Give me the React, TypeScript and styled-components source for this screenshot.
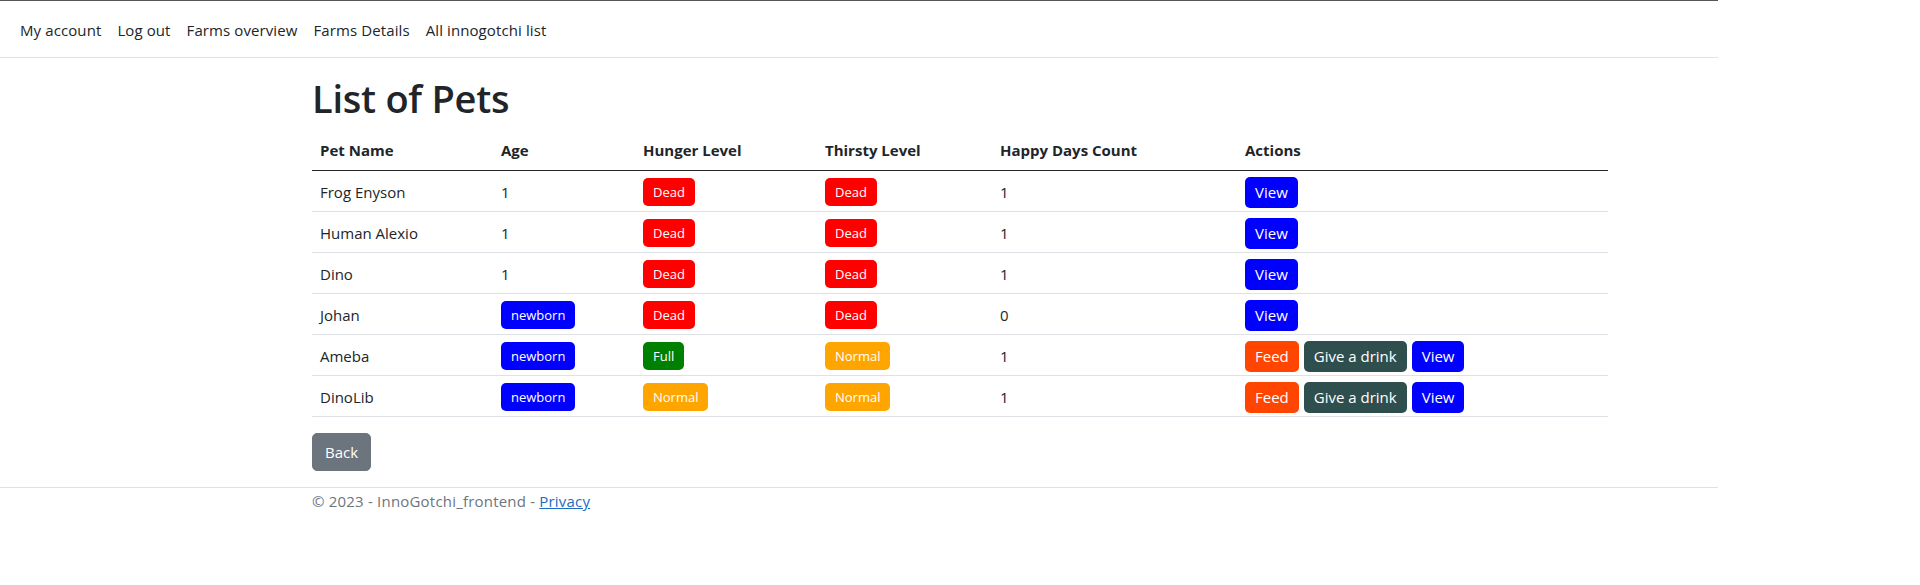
import React from 'react';
import styled, { createGlobalStyle } from 'styled-components';

const GlobalStyle = createGlobalStyle`
  html, body {
    margin: 0;
    padding: 0;
    background: #fff;
  }
  body {
    font-family: 'Open Sans', 'Noto Sans', sans-serif;
    font-size: 15px;
    line-height: 24px;
    color: #212529;
  }
`;

type Tone = 'dead' | 'newborn' | 'full' | 'normal';
type Action = 'feed' | 'drink' | 'view';

const toneColors: Record<Tone, string> = {
  dead: '#ff0000',
  newborn: '#0000ff',
  full: '#008000',
  normal: '#ffa500',
};

const actionColors: Record<Action, string> = {
  feed: '#ff4500',
  drink: '#2f4f4f',
  view: '#0000ff',
};

const actionLabels: Record<Action, string> = {
  feed: 'Feed',
  drink: 'Give a drink',
  view: 'View',
};

const Page = styled.div`
  width: 1920px;
  min-height: 585px;
`;

const NavBar = styled.nav`
  width: 1718px;
  box-sizing: border-box;
  border-top: 1px solid #555;
  border-bottom: 1px solid #dee2e6;
  padding: 8px 12px 7px;
  margin-bottom: 16px;
`;

const NavList = styled.ul`
  display: flex;
  list-style: none;
  margin: 0;
  padding: 0;
`;

const NavLink = styled.a`
  display: block;
  padding: 9px 8px 8px;
  color: #212529;
  letter-spacing: 0.1px;
  text-decoration: none;
  cursor: pointer;
`;

const Container = styled.main`
  width: 1296px;
  margin: 0 auto;
  padding-bottom: 16px;
`;

const Title = styled.h1`
  margin: 0 0 8px;
  font-size: 38px;
  line-height: 48px;
  font-weight: 600;
  letter-spacing: -0.25px;
`;

const Table = styled.table`
  width: 100%;
  table-layout: fixed;
  border-collapse: collapse;
  margin-bottom: 16px;
`;

const HeadCell = styled.th`
  text-align: left;
  font-weight: 700;
  padding: 8px;
  border-bottom: 1px solid #212529;
`;

const Row = styled.tr`
  height: 41px;
  border-bottom: 1px solid #dee2e6;
`;

const Cell = styled.td`
  padding: 5px 8px 3px;
  vertical-align: middle;
`;

const Badge = styled.span<{ $tone: Tone }>`
  display: inline-block;
  vertical-align: middle;
  padding: 4px 10px;
  font-size: 13px;
  line-height: 20px;
  border-radius: 5px;
  color: #fff;
  background: ${p => toneColors[p.$tone]};
`;

const Actions = styled.div`
  display: flex;
  gap: 5px;
`;

const ActionButton = styled.button<{ $kind: Action }>`
  font: inherit;
  font-size: 15px;
  line-height: 23px;
  padding: 4px 10px;
  border: 0;
  border-radius: 5px;
  color: #fff;
  background: ${p => actionColors[p.$kind]};
  cursor: pointer;
`;

const BackButton = styled.button`
  font: inherit;
  line-height: 24px;
  padding: 6px 12px;
  border: 1px solid #6c757d;
  border-radius: 5px;
  color: #fff;
  background: #6c757d;
  cursor: pointer;
`;

const FooterRule = styled.div`
  width: 1718px;
  border-top: 1px solid #dee2e6;
`;

const FooterText = styled.footer`
  width: 1296px;
  margin: 0 auto;
  padding-top: 1px;
  color: #6c757d;
  letter-spacing: 0.2px;
  a {
    color: #1b6ec2;
  }
`;

interface Pet {
  name: string;
  age: number | 'newborn';
  hunger: Tone;
  thirst: Tone;
  happyDays: number;
  actions: Action[];
}

const toneLabel = (t: Tone) =>
  t === 'dead' ? 'Dead' : t === 'full' ? 'Full' : t === 'normal' ? 'Normal' : 'newborn';

const pets: Pet[] = [
  { name: 'Frog Enyson', age: 1, hunger: 'dead', thirst: 'dead', happyDays: 1, actions: ['view'] },
  { name: 'Human Alexio', age: 1, hunger: 'dead', thirst: 'dead', happyDays: 1, actions: ['view'] },
  { name: 'Dino', age: 1, hunger: 'dead', thirst: 'dead', happyDays: 1, actions: ['view'] },
  { name: 'Johan', age: 'newborn', hunger: 'dead', thirst: 'dead', happyDays: 0, actions: ['view'] },
  { name: 'Ameba', age: 'newborn', hunger: 'full', thirst: 'normal', happyDays: 1, actions: ['feed', 'drink', 'view'] },
  { name: 'DinoLib', age: 'newborn', hunger: 'normal', thirst: 'normal', happyDays: 1, actions: ['feed', 'drink', 'view'] },
];

const columns = [
  { title: 'Pet Name', width: 181 },
  { title: 'Age', width: 142 },
  { title: 'Hunger Level', width: 182 },
  { title: 'Thirsty Level', width: 175 },
  { title: 'Happy Days Count', width: 245 },
  { title: 'Actions', width: 371 },
];

const App = () => (
  <Page>
    <GlobalStyle />
    <NavBar>
      <NavList>
        {['My account', 'Log out', 'Farms overview', 'Farms Details', 'All innogotchi list'].map(item => (
          <li key={item}>
            <NavLink>{item}</NavLink>
          </li>
        ))}
      </NavList>
    </NavBar>
    <Container>
      <Title>List of Pets</Title>
      <Table>
        <colgroup>
          {columns.map(c => (
            <col key={c.title} style={{ width: c.width }} />
          ))}
        </colgroup>
        <thead>
          <tr>
            {columns.map(c => (
              <HeadCell key={c.title}>{c.title}</HeadCell>
            ))}
          </tr>
        </thead>
        <tbody>
          {pets.map(pet => (
            <Row key={pet.name}>
              <Cell>{pet.name}</Cell>
              <Cell>
                {pet.age === 'newborn' ? <Badge $tone="newborn">newborn</Badge> : pet.age}
              </Cell>
              <Cell>
                <Badge $tone={pet.hunger}>{toneLabel(pet.hunger)}</Badge>
              </Cell>
              <Cell>
                <Badge $tone={pet.thirst}>{toneLabel(pet.thirst)}</Badge>
              </Cell>
              <Cell>{pet.happyDays}</Cell>
              <Cell>
                <Actions>
                  {pet.actions.map(a => (
                    <ActionButton key={a} $kind={a}>
                      {actionLabels[a]}
                    </ActionButton>
                  ))}
                </Actions>
              </Cell>
            </Row>
          ))}
        </tbody>
      </Table>
      <BackButton>Back</BackButton>
    </Container>
    <FooterRule />
    <FooterText>
      © 2023 - InnoGotchi_frontend - <a href="#privacy">Privacy</a>
    </FooterText>
  </Page>
);

export default App;
